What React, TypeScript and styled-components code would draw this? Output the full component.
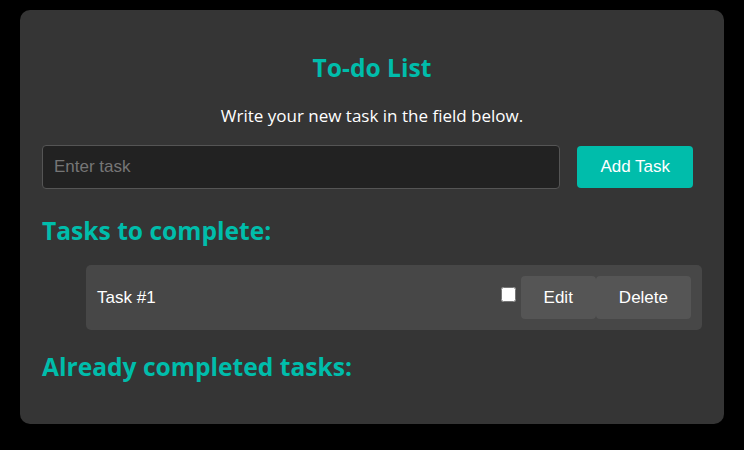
import React, { useState } from 'react';
import styled, { createGlobalStyle } from 'styled-components';

const GlobalStyle = createGlobalStyle`
  html, body {
    margin: 0;
    padding: 0;
    background: #000;
  }
  body {
    font-family: "Open Sans", "Noto Sans", sans-serif;
  }
`;

const TEAL = '#00bdab';

const Card = styled.div`
  box-sizing: border-box;
  width: 704px;
  margin: 10px 20px;
  padding: 22px;
  background: #353535;
  border-radius: 10px;
  color: #fff;
`;

const Title = styled.h1`
  margin: 21px 0 0;
  font-size: 24.6px;
  line-height: 30px;
  font-weight: 700;
  color: ${TEAL};
  text-align: center;
`;

const Subtitle = styled.p`
  margin: 23px 0 0;
  font-size: 17px;
  line-height: 20px;
  text-align: center;
`;

const Form = styled.form`
  display: flex;
  align-items: center;
  gap: 17px;
  margin: 19px 9px 0 0;
`;

const Input = styled.input`
  flex: 1;
  box-sizing: border-box;
  height: 44px;
  padding: 0 11px;
  background: #222;
  border: 1px solid #555;
  border-radius: 4px;
  color: #fff;
  font-family: "Liberation Sans", Arial, sans-serif;
  font-size: 17px;
  outline: none;

  &::placeholder {
    color: #767676;
  }
`;

const Button = styled.button<{ $primary?: boolean }>`
  height: ${(p) => (p.$primary ? '42px' : '43px')};
  padding: 0 23px;
  border: none;
  border-radius: 4px;
  background: ${(p) => (p.$primary ? TEAL : '#555')};
  color: #fff;
  font-family: "Liberation Sans", Arial, sans-serif;
  font-size: 17px;
  cursor: pointer;
`;

const Section = styled.h2<{ $gap: number }>`
  margin: ${(p) => p.$gap}px 0 0;
  font-size: 24.6px;
  line-height: 30px;
  font-weight: 700;
  color: ${TEAL};
`;

const List = styled.ul`
  list-style: none;
  margin: 19px 0 0;
  padding: 0 0 0 44px;
`;

const Row = styled.li`
  display: flex;
  align-items: center;
  padding: 11px;
  background: #474747;
  border-radius: 5px;
`;

const TaskName = styled.span`
  flex: 1;
  font-family: "Liberation Sans", Arial, sans-serif;
  font-size: 17px;
`;

const Check = styled.input`
  flex-shrink: 0;
  width: 15px;
  height: 15px;
  margin: 0 5px 7px 0;
`;

const Actions = styled.div`
  display: flex;
`;

const BottomSpace = styled.div`
  height: 20px;
`;

export default function App() {
  const [done, setDone] = useState(false);
  return (
    <>
      <GlobalStyle />
      <Card>
        <Title>To-do List</Title>
        <Subtitle>Write your new task in the field below.</Subtitle>
        <Form onSubmit={(e) => e.preventDefault()}>
          <Input placeholder="Enter task" />
          <Button $primary type="submit">Add Task</Button>
        </Form>
        <Section $gap={27}>Tasks to complete:</Section>
        <List>
          <Row>
            <TaskName>Task #1</TaskName>
            <Check type="checkbox" checked={done} onChange={() => setDone(!done)} />
            <Actions>
              <Button>Edit</Button>
              <Button>Delete</Button>
            </Actions>
          </Row>
        </List>
        <Section $gap={22}>Already completed tasks:</Section>
        <BottomSpace />
      </Card>
    </>
  );
}
